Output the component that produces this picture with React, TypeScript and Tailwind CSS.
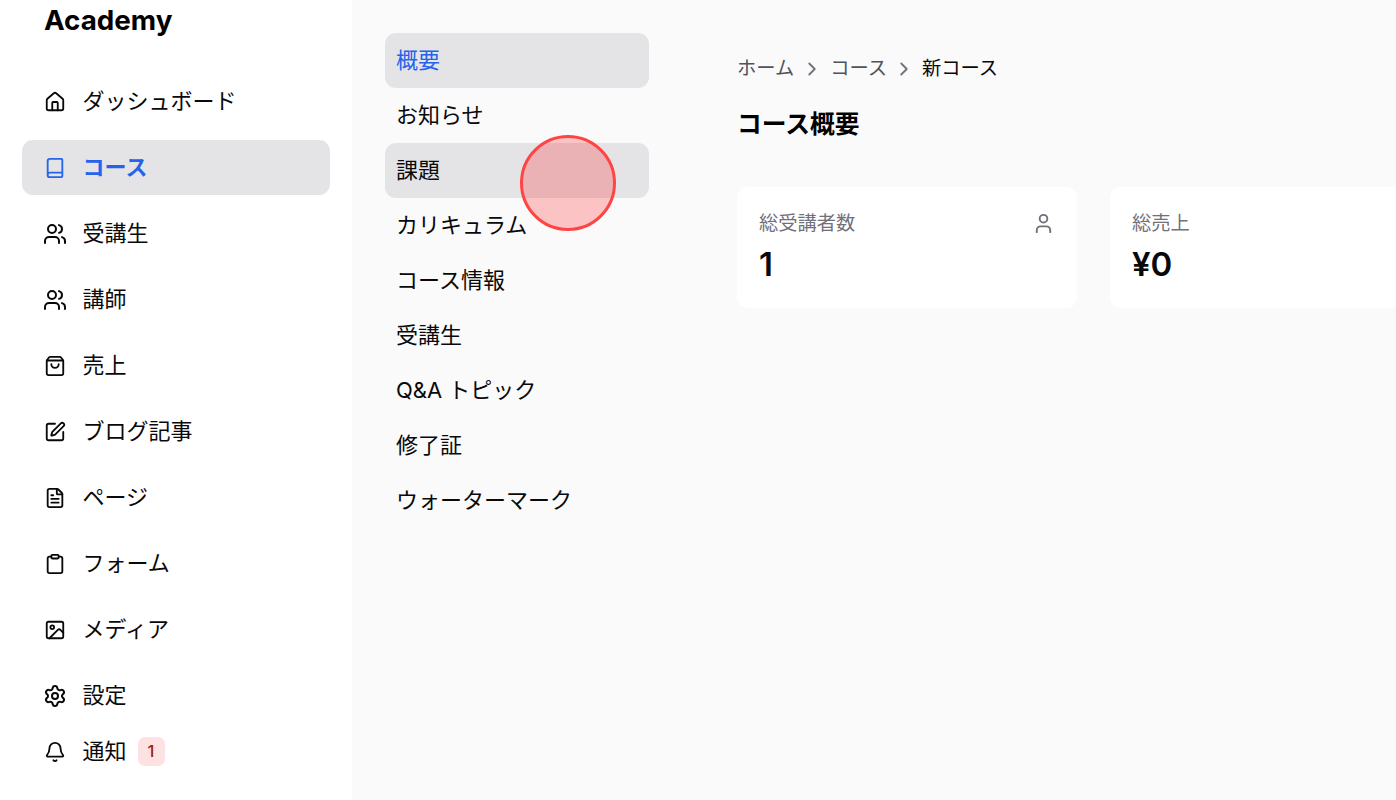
import React from 'react';
import {
  House,
  Book,
  Users,
  ShoppingBag,
  SquarePen,
  FileText,
  Clipboard,
  Image,
  Settings,
  Bell,
  User,
  ChevronRight,
} from 'lucide-react';

const smallIcon = 'size-[22px] flex-none';
const wideIcon = '-mx-[1px] size-[24px] flex-none';

const navItems = [
  { label: 'ダッシュボード', icon: House, iconClass: smallIcon },
  { label: 'コース', icon: Book, iconClass: smallIcon, active: true },
  { label: '受講生', icon: Users, iconClass: wideIcon },
  { label: '講師', icon: Users, iconClass: wideIcon },
  { label: '売上', icon: ShoppingBag, iconClass: smallIcon },
  { label: 'ブログ記事', icon: SquarePen, iconClass: smallIcon },
  { label: 'ページ', icon: FileText, iconClass: smallIcon },
  { label: 'フォーム', icon: Clipboard, iconClass: smallIcon },
  { label: 'メディア', icon: Image, iconClass: smallIcon },
  { label: '設定', icon: Settings, iconClass: wideIcon },
];

const subItems = [
  { label: '概要', active: true },
  { label: 'お知らせ' },
  { label: '課題', hovered: true },
  { label: 'カリキュラム' },
  { label: 'コース情報' },
  { label: '受講生' },
  { label: 'Q&A トピック' },
  { label: '修了証' },
  { label: 'ウォーターマーク' },
];

const font = "font-['Inter','Noto_Sans_CJK_JP',sans-serif]";

export default function App() {
  return (
    <div className={`${font} relative flex h-[800px] w-[1396px] overflow-hidden bg-[#fafafa] text-[22px] text-[#09090b]`}>
      {/* Main Sidebar */}
      <aside className="w-[352px] flex-none bg-white px-[22px]">
        <div className="pl-[22px] pt-[4px] text-[27.75px] leading-[33px] font-bold text-black">Academy</div>

        <nav className="mt-[37px] flex flex-col gap-[11px]">
          {navItems.map((item) => {
            const Icon = item.icon;
            return (
              <div
                key={item.label}
                className={`flex h-[55px] items-center gap-[16.5px] rounded-[11px] px-[22px] ${
                  item.active ? 'bg-[#e4e4e7] font-semibold text-[#2563eb]' : ''
                }`}
              >
                <Icon className={item.iconClass} strokeWidth={2} />
                <span>{item.label}</span>
              </div>
            );
          })}
          {/* Notifications */}
          <div className="-mt-[10px] flex h-[55px] items-center gap-[16.5px] px-[22px]">
            <Bell className={smallIcon} strokeWidth={2} />
            <span>通知</span>
            <span className="-ml-[5.5px] flex h-[29px] w-[27px] items-center justify-center rounded-[7px] bg-[#fee2e2] text-[16.5px] font-medium text-[#991b1b]">
              1
            </span>
          </div>
        </nav>
      </aside>

      {/* Course Sub Navigation */}
      <div className="mt-[33px] ml-[33px] flex w-[264px] flex-none flex-col">
        {subItems.map((item) => (
          <div
            key={item.label}
            className={`flex h-[55px] flex-none items-center rounded-[11px] px-[11px] ${
              item.active ? 'bg-[#e4e4e7] text-[#2563eb]' : item.hovered ? 'bg-[#e4e4e7]' : ''
            }`}
          >
            {item.label}
          </div>
        ))}
      </div>

      {/* Content */}
      <main className="ml-[88px] flex-none pt-[55px]">
        <div className="flex h-[27px] items-center text-[19.25px] text-[#52525b]">
          <span>ホーム</span>
          <ChevronRight className="mx-[7px] size-[22px] text-[#71717a]" />
          <span>コース</span>
          <ChevronRight className="mx-[6.5px] size-[22px] text-[#71717a]" />
          <span className="text-[#09090b]">新コース</span>
        </div>

        <h1 className="mt-[26px] text-[24.75px] leading-[33px] font-bold text-black">コース概要</h1>

        <div className="mt-[46px] flex gap-[33px]">
          <div className="h-[121px] w-[340px] flex-none rounded-[11px] bg-white px-[22px] pt-[23px]">
            <div className="flex items-center justify-between">
              <span className="text-[19.25px] leading-[27px] text-[#71717a]">総受講者数</span>
              <User className="size-[23px] text-[#71717a]" />
            </div>
            <div className="mt-[5px] text-[33px] leading-[44px] font-semibold">1</div>
          </div>
          <div className="h-[121px] w-[340px] flex-none rounded-[11px] bg-white px-[22px] pt-[23px]">
            <div className="text-[19.25px] leading-[27px] text-[#71717a]">総売上</div>
            <div className="mt-[5px] text-[33px] leading-[44px] font-semibold">¥0</div>
          </div>
        </div>
      </main>

      {/* Click marker */}
      <div className="absolute top-[135px] left-[520px] size-[96px] rounded-full border-[3px] border-[#ff4444] bg-[#ff0000]/22" />
    </div>
  );
}
